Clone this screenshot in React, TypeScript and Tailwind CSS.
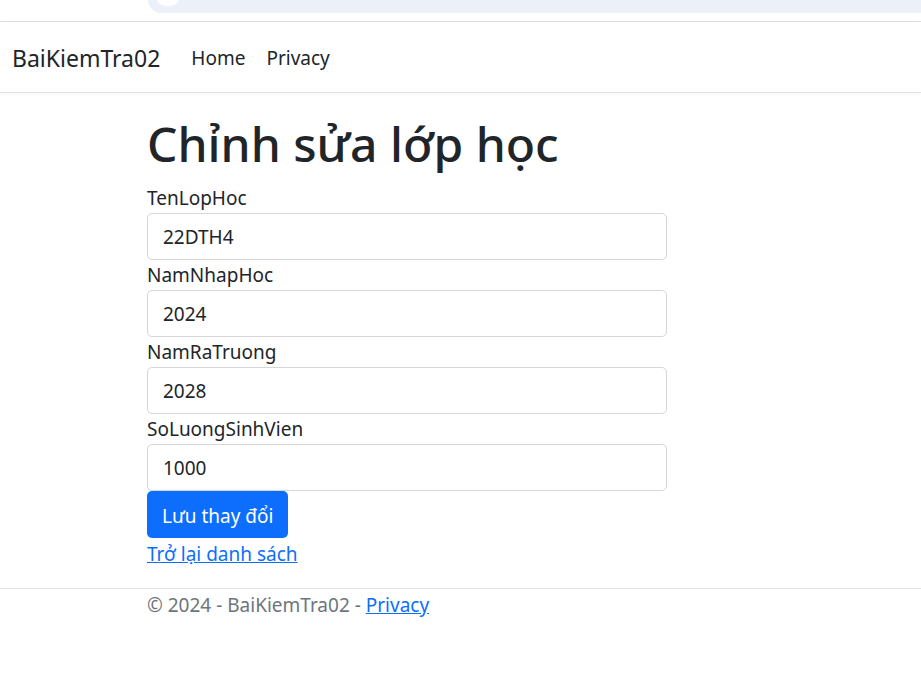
import { FC } from "react";

const fields: { label: string; value: string }[] = [
  { label: "TenLopHoc", value: "22DTH4" },
  { label: "NamNhapHoc", value: "2024" },
  { label: "NamRaTruong", value: "2028" },
  { label: "SoLuongSinhVien", value: "1000" },
];

const font = { fontFamily: "'Noto Sans', 'Open Sans', sans-serif" };

const App: FC = () => {
  return (
    <div className="min-h-[687px] bg-white text-[#212529]" style={font}>
      {/* browser chrome remnant */}
      <div className="flex h-[22px] border-b border-[#dfdfdf]">
        <div className="ml-[148px] flex h-[13px] flex-1 items-start rounded-bl-[13px] bg-[#ecf1f9] pl-[8px]">
          <div className="-mt-[14px] h-[20px] w-[24px] rounded-full bg-white" />
        </div>
      </div>
      <header className="flex h-[71px] items-center border-b border-[#dee2e6] pt-[2px] shadow-[0_1px_4px_rgba(0,0,0,0.04)]">
        <a className="ml-[12px] mr-[31px] text-[23px] leading-[37px]">BaiKiemTra02</a>
        <nav className="flex gap-[21px] text-[19px]">
          <a>Home</a>
          <a>Privacy</a>
        </nav>
      </header>
      <main className="ml-[147px] w-[520px] pt-[20px]">
        <h1 className="mb-[10px] pt-[2px] text-[48px] font-medium leading-[58px]">Chỉnh sửa lớp học</h1>
        <form className="flex flex-col">
          {fields.map((f) => (
            <div key={f.label} className="flex flex-col">
              <label className="pt-[1px] text-[19px] leading-[29px]">{f.label}</label>
              <input
                readOnly
                value={f.value}
                className="h-[47px] rounded-[5px] border border-[#d4d7db] px-[15px] text-[19px] text-[#212529] outline-none"
              />
            </div>
          ))}
          <div>
            <button
              type="button"
              className="h-[47px] rounded-[5px] bg-[#0d6efd] px-[15px] pt-[3px] text-[19px] text-white"
            >
              Lưu thay đổi
            </button>
          </div>
        </form>
        <div className="mt-[1px] text-[19px] leading-[30px]">
          <a className="text-[#0d6efd] underline">Trở lại danh sách</a>
        </div>
      </main>
      <footer className="mt-[19px] border-t border-[#dee2e6]">
        <div className="ml-[147px] text-[19px] leading-[32px] text-[#6c757d]">
          © 2024 - BaiKiemTra02 - <a className="text-[#0d6efd] underline">Privacy</a>
        </div>
      </footer>
    </div>
  );
};

export default App;
